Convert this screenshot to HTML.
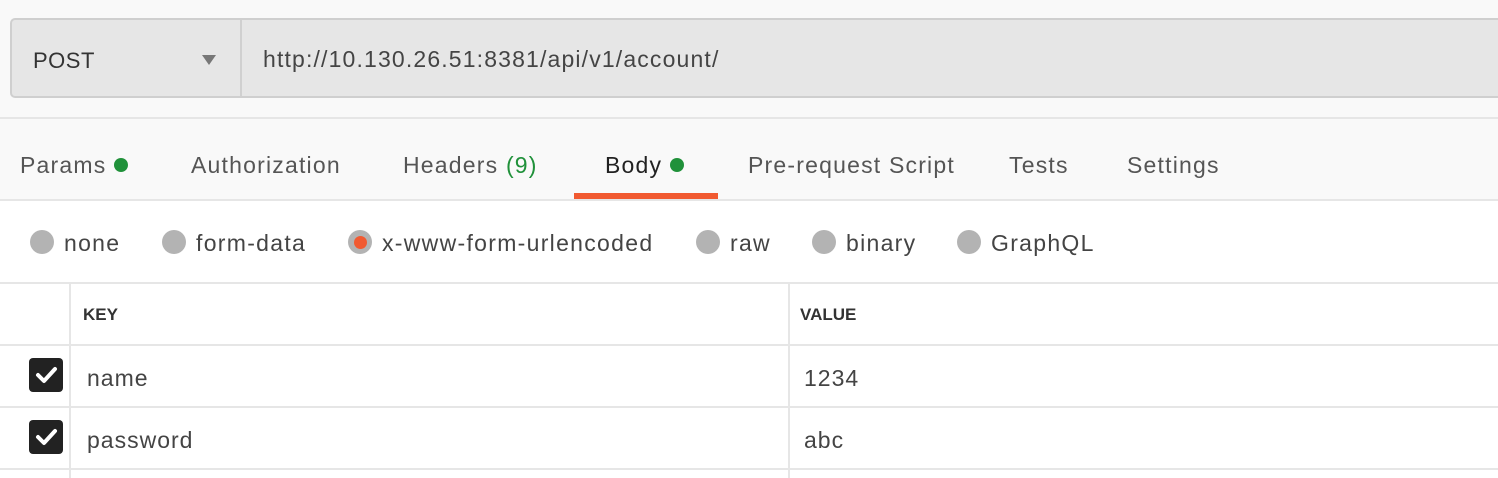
<!DOCTYPE html>
<html><head><style>
*{margin:0;padding:0;box-sizing:border-box}
body{width:1498px;height:478px;overflow:hidden;background:#fff;font-family:"Liberation Sans",sans-serif;color:#333;position:relative}
.a{position:absolute;white-space:nowrap}
.top{position:absolute;left:0;top:0;width:1498px;height:201px;background:#f9f9f9}
.bar{position:absolute;left:10px;top:18px;width:1500px;height:80px;background:#e6e6e6;border:2px solid #cfcfcf;border-right:none;border-radius:5px 0 0 5px}
.hl{position:absolute;left:0;width:1498px;height:2px;background:#e6e6e6}
.vl{position:absolute;width:2px;background:#e6e6e6}
.tab{position:absolute;top:152px;font-size:23px;color:#555;letter-spacing:1.2px;white-space:nowrap}
.dot{display:inline-block;width:14px;height:14px;border-radius:50%;background:#20913a;vertical-align:1px;margin-left:8px}
.r{position:absolute;top:230px;width:24px;height:24px;border-radius:50%;background:#b3b3b3}
.rl{position:absolute;top:230px;font-size:23px;color:#444;letter-spacing:1.3px;white-space:nowrap}
.cb{position:absolute;left:29px;width:34px;height:34px;background:#222;border-radius:4px}
.cell{position:absolute;font-size:23px;color:#444;letter-spacing:1px}
</style></head><body>
<div class="top"></div>
<div class="bar"></div>
<div class="a" style="left:240px;top:20px;width:2px;height:76px;background:#d0d0d0"></div>
<div class="a" style="left:33px;top:48px;font-size:22px;color:#333;letter-spacing:0.5px">POST</div>
<div class="a" style="left:202px;top:55px;width:0;height:0;border-left:7px solid transparent;border-right:7px solid transparent;border-top:10px solid #777"></div>
<div class="a" style="left:263px;top:46px;font-size:23px;color:#444;letter-spacing:1.15px">http://10.130.26.51:8381/api/v1/account/</div>
<div class="hl" style="top:117px"></div>
<div class="tab" style="left:20px">Params<span class="dot"></span></div>
<div class="tab" style="left:191px">Authorization</div>
<div class="tab" style="left:403px">Headers <span style="color:#20913a">(9)</span></div>
<div class="tab" style="left:605px;color:#222">Body<span class="dot"></span></div>
<div class="tab" style="left:748px">Pre-request Script</div>
<div class="tab" style="left:1009px">Tests</div>
<div class="tab" style="left:1127px">Settings</div>
<div class="a" style="left:574px;top:193px;width:144px;height:6px;background:#f15a31"></div>
<div class="hl" style="top:199px"></div>
<div class="r" style="left:30px"></div><div class="rl" style="left:64px">none</div>
<div class="r" style="left:162px"></div><div class="rl" style="left:196px">form-data</div>
<div class="r" style="left:348px"></div><div class="a" style="left:354px;top:236px;width:13px;height:13px;border-radius:50%;background:#f15a31"></div><div class="rl" style="left:382px">x-www-form-urlencoded</div>
<div class="r" style="left:696px"></div><div class="rl" style="left:730px">raw</div>
<div class="r" style="left:812px"></div><div class="rl" style="left:846px">binary</div>
<div class="r" style="left:957px"></div><div class="rl" style="left:991px">GraphQL</div>
<div class="hl" style="top:282px"></div>
<div class="hl" style="top:344px"></div>
<div class="hl" style="top:406px"></div>
<div class="hl" style="top:468px"></div>
<div class="vl" style="left:69px;top:284px;height:194px"></div>
<div class="vl" style="left:788px;top:284px;height:194px"></div>
<div class="a" style="left:83px;top:305px;font-size:17px;font-weight:bold;color:#333">KEY</div>
<div class="a" style="left:800px;top:305px;font-size:17px;font-weight:bold;color:#333">VALUE</div>
<div class="cb" style="top:358px"><svg width="34" height="34"><path d="M9 17l6 6 11-12" stroke="#fff" stroke-width="4" fill="none" stroke-linecap="round" stroke-linejoin="round"/></svg></div>
<div class="cb" style="top:420px"><svg width="34" height="34"><path d="M9 17l6 6 11-12" stroke="#fff" stroke-width="4" fill="none" stroke-linecap="round" stroke-linejoin="round"/></svg></div>
<div class="cell" style="left:87px;top:365px">name</div>
<div class="cell" style="left:804px;top:365px">1234</div>
<div class="cell" style="left:87px;top:427px">password</div>
<div class="cell" style="left:804px;top:427px">abc</div>
</body></html>
